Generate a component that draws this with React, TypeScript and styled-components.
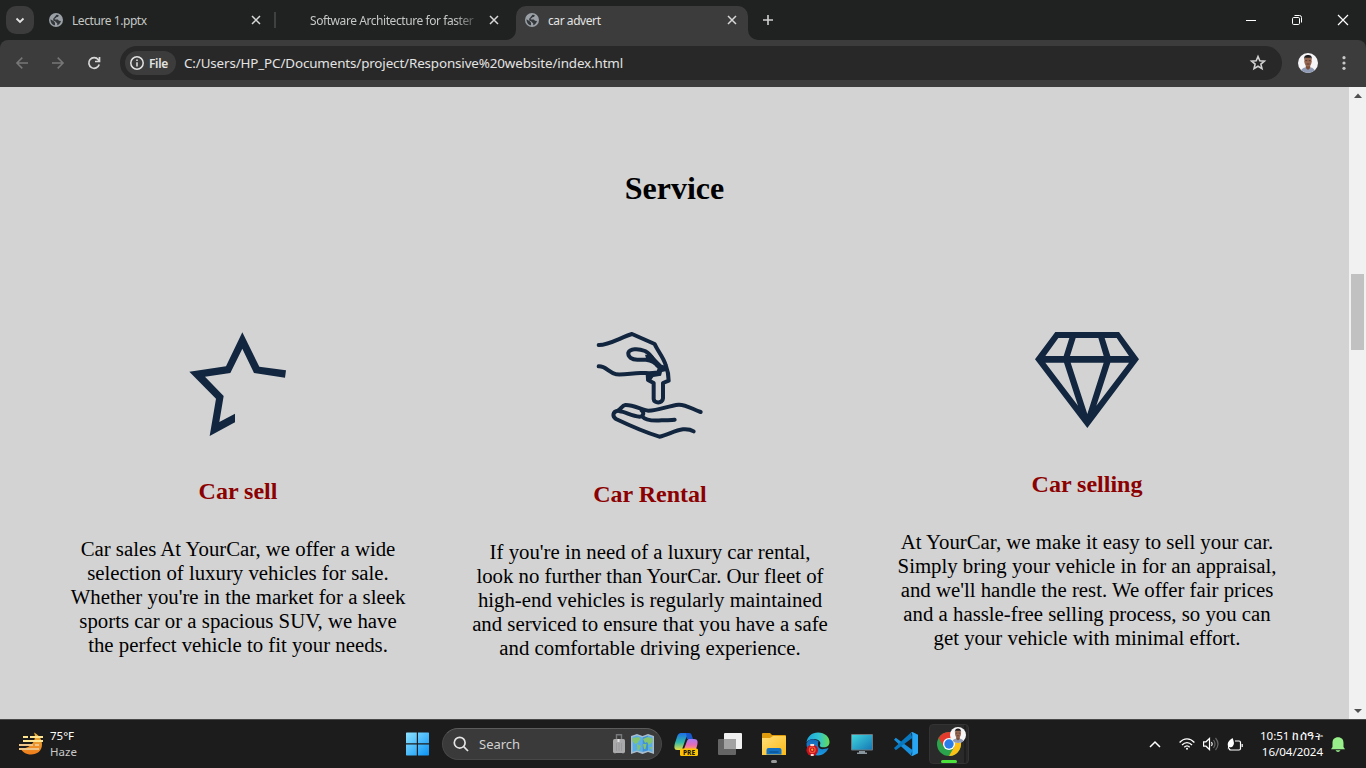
import React from "react";
import styled, { createGlobalStyle } from "styled-components";

const ui = `"Noto Sans", "Open Sans", sans-serif`;

const GlobalStyle = createGlobalStyle`
  * { box-sizing: border-box; }
  body { margin: 0; overflow: hidden; background: #202221; }
  svg { display: block; flex: none; overflow: visible; }
`;

const Screen = styled.div`
  width: 1366px;
  height: 768px;
  display: flex;
  flex-direction: column;
  font-family: ${ui};
`;

/* ---------- browser frame ---------- */

const TabStrip = styled.header`
  height: 40px;
  flex: none;
  display: flex;
  background: #202221;
  padding: 6px 0 0 6px;
`;

const TabSearch = styled.div`
  width: 28px;
  height: 28px;
  border-radius: 10px;
  background: #3c3c3c;
  display: grid;
  place-items: center;
`;

const Tab = styled.div<{ $active?: boolean; $width: number; $left: number; $right: number }>`
  position: relative;
  width: ${(p) => p.$width}px;
  height: 34px;
  display: flex;
  align-items: center;
  padding: 0 ${(p) => p.$right}px 6px ${(p) => p.$left}px;
  border-radius: 10px 10px 0 0;
  background: ${(p) => (p.$active ? "#3c3c3c" : "transparent")};
  color: ${(p) => (p.$active ? "#e3e3e3" : "#c4c7c5")};
`;

const TabFoot = styled.svg<{ $side: "left" | "right" }>`
  position: absolute;
  bottom: 0;
  ${(p) => p.$side}: -10px;
`;

const TabTitle = styled.span<{ $fade?: boolean }>`
  flex: 1;
  min-width: 0;
  margin-left: 9px;
  padding-top: 1px;
  font-size: 12px;
  line-height: 18px;
  letter-spacing: -0.43px;
  white-space: nowrap;
  ${(p) => p.$fade && "mask-image: linear-gradient(90deg, #000 80%, transparent 96%);"}
`;

const FaviconGap = styled.span`
  width: 16px;
  flex: none;
`;

const Divider = styled.div`
  width: 2px;
  height: 16px;
  margin-top: 6px;
  background: #3f4140;
`;

const NewTab = styled.div`
  margin: 9px 0 0 15px;
`;

const WindowButtons = styled.div`
  margin-left: auto;
  display: flex;

  > span {
    width: 46px;
    height: 28px;
    display: grid;
    place-items: center;
  }
`;

const ToolbarBack = styled.div`
  background: #202221;
  flex: none;
`;

const Toolbar = styled.nav`
  height: 47px;
  display: flex;
  align-items: center;
  padding: 0 14px 1px 14px;
  background: #3c3c3c;
  border-radius: 8px 8px 0 0;
`;

const NavButton = styled.span`
  width: 36px;
  display: flex;
  padding-left: 2px;
`;

const AddressBar = styled.div`
  width: 1162px;
  height: 34px;
  margin-left: -2px;
  display: flex;
  align-items: center;
  padding: 0 16px 0 5px;
  border-radius: 17px;
  background: #282828;

  > svg { margin-top: -2px; }
`;

const FileChip = styled.div`
  width: 51px;
  height: 24px;
  display: flex;
  align-items: center;
  gap: 5px;
  padding-left: 5px;
  border-radius: 12px;
  background: #3c3c3c;
  color: #e3e3e3;
  font-size: 12px;
  font-weight: 600;
  letter-spacing: -0.35px;
`;

const Url = styled.span`
  flex: 1;
  margin-left: 8px;
  color: #e3e3e3;
  font-size: 13.4px;
  letter-spacing: -0.13px;
  white-space: nowrap;
`;

const ProfileSlot = styled.span`
  margin: 0 24px 0 16px;
`;

/* ---------- web page ---------- */

const Viewport = styled.div`
  height: 632px;
  flex: none;
  display: flex;
`;

const Page = styled.main`
  width: 1349px;
  padding-top: 83px;
  background: #d3d3d3;
  color: #000;
  font-family: "Liberation Serif", serif;
  text-align: center;
`;

const SectionTitle = styled.h1`
  margin: 0 0 126px;
  font-size: 32px;
  line-height: 36px;
`;

const Cards = styled.section`
  display: flex;
  align-items: flex-start;
  padding-left: 68px;
`;

const Card = styled.article<{ $width: number; $gap?: number }>`
  width: ${(p) => p.$width}px;
  margin-right: ${(p) => p.$gap ?? 0}px;
  display: flex;
  flex-direction: column;
  align-items: center;
`;

const CardTitle = styled.h2`
  margin: 41px 0 32px;
  color: #8b0000;
  font-size: 24px;
  line-height: 28px;
`;

const CardText = styled.p`
  margin: 0;
  font-size: 20.8px;
  line-height: 24px;
`;

const Line = styled.span`
  display: block;
  white-space: nowrap;
`;

const Scrollbar = styled.aside`
  width: 17px;
  background: #f1f1f1;
  display: flex;
  flex-direction: column;
  align-items: center;
  padding: 6px 0 6px;
`;

const Thumb = styled.div`
  width: 13px;
  height: 76px;
  margin: 176px 0 auto;
  background: #c1c1c1;
`;

/* ---------- taskbar ---------- */

const Taskbar = styled.footer`
  height: 49px;
  flex: none;
  display: flex;
  align-items: center;
  border-top: 1px solid #484848;
  background: #1c1c1c;
  color: #fff;
`;

const Weather = styled.div`
  width: 395px;
  display: flex;
  align-items: center;
  padding-left: 19px;
  gap: 7px;
  font-size: 11.5px;
  line-height: 16px;
`;

const Muted = styled.div`
  color: #c8c8c8;
`;

const AppCell = styled.div`
  position: relative;
  width: 44px;
  height: 48px;
  display: grid;
  place-items: center;
`;

const RunningDot = styled.i`
  position: absolute;
  left: 19px;
  bottom: 5px;
  width: 6px;
  height: 3px;
  border-radius: 2px;
  background: #9a9a9a;
`;

const SearchBox = styled.div`
  width: 220px;
  height: 32px;
  margin: 0 2px 0 3px;
  display: flex;
  align-items: center;
  padding: 0 7px 0 11px;
  border: 1px solid #474747;
  border-top-color: #5c5c5c;
  border-radius: 16px;
  background: #3a3a3a;
  color: #d2d2d2;
  font-size: 13px;

  > span { flex: 1; margin-left: 9px; }
  > svg:last-child { margin-left: 6px; }
`;

const Tray = styled.div`
  margin-left: auto;
  display: flex;
  align-items: center;
  padding-right: 21px;
`;

const TrayIcon = styled.span<{ $gap: number }>`
  margin-right: ${(p) => p.$gap}px;
`;

const Clock = styled.div`
  width: 63px;
  margin-right: 8px;
  display: flex;
  flex-direction: column;
  align-items: flex-end;
  font-size: 11.6px;
  line-height: 16px;
  letter-spacing: -0.05px;
  white-space: nowrap;
`;

const Meridiem = styled.span`
  font-size: 12px;
  letter-spacing: 0.4px;
`;

/* ---------- icons ---------- */

const Globe = () => (
  <svg width="14" height="14" viewBox="0 0 14 14">
    <circle cx="7" cy="7" r="7" fill="#9aa0a6" />
    <path d="M1.5 6.2 4.8 8.2 6 9.8V12.3C3.4 12 1.4 9.6 1.5 6.2ZM7.5 1.7 9.6 1.9C9.8 3.4 8.7 4 7.6 4.1 7.3 5 6.7 5.3 5.8 5.3V6.5H8.8L10 7.8 12 8C11.4 10.2 9.9 11.7 8.2 12.2L8.3 10.5 6 8.2 4.2 7.6V5.7L5.5 4.2Z" fill="#33373a" />
  </svg>
);

const Cross = ({ size = 8, color = "#d8d8d8", weight = 1.5 }: { size?: number; color?: string; weight?: number }) => (
  <svg width={size} height={size} viewBox={`0 0 ${size} ${size}`}>
    <path d={`M0 0 ${size} ${size}M${size} 0 0 ${size}`} stroke={color} strokeWidth={weight} />
  </svg>
);

const Avatar = ({ size }: { size: number }) => (
  <svg width={size} height={size} viewBox="0 0 20 20">
    <clipPath id={`face${size}`}><circle cx="10" cy="10" r="10" /></clipPath>
    <g clipPath={`url(#face${size})`}>
      <rect width="20" height="20" fill="#f6f6f8" />
      <path d="M2.5 20C2.5 15.5 6 14.3 10 14.3S17 15.5 17.5 20Z" fill="#8f9bb5" />
      <path d="M7.8 11H12.2V15L10 17 7.8 15Z" fill="#7a4e38" />
      <ellipse cx="10" cy="8.2" rx="3.7" ry="5.2" fill="#966751" />
      <path d="M6.1 7C5.6 3.3 7.500 2 10 2S14.400 3.300 13.900 7L13.200 4.700H6.800Z" fill="#211c1b" />
      <path d="M7.300 7.600H9.200M10.800 7.600H12.700M8.500 11H11.500" stroke="#4e3027" strokeWidth=".8" />
    </g>
  </svg>
);

const navy = "#12263f";

const StarArt = () => (
  <svg width="99" height="104" viewBox="27 36 297 312">
    <path fill={navy} d="M187 37 238 140 318 151 315 173 222 159 187 86 151 159 75 170 131 228 118 306 165 281V307L89 348 108 236 28 155 138 139Z" />
  </svg>
);

const KeyArt = () => (
  <svg width="108" height="107" viewBox="33 36 324 321" fill="none" stroke={navy} strokeWidth="12" strokeLinecap="round" strokeLinejoin="round">
    <path d="M41 75C70 76 108 52 141 42L209 72C218 93 235 111 242 135C248 151 251 166 251 182L234 189V235C233 251 207 251 206 237V189L189 180V168" />
    <path d="M41 139C63 138 71 158 94 163C123 165 145 158 170 159C185 159 197 161 212 158" />
    <path d="M216 136C205 121 202 104 180 93C159 85 135 86 130 98C128 111 141 119 157 119H183C201 121 213 129 221 141" />
    <path fill={navy} stroke="none" d="M180 104 202 106 230 134 244 138V153L231 156 228 167 205 171 197 182 183 178 182 161 212 157 219 145 209 131 185 121Z" />
    <path d="M347 276C323 268 303 253 281 254C249 257 222 272 190 272C170 270 146 254 121 255C110 256 110 268 98 272C82 275 82 290 93 297C135 317 181 337 223 350C249 345 268 331 294 328C308 327 318 329 326 334" />
    <path d="M104 274C121 275 139 288 164 290C176 289 178 277 170 272M170 288C182 302 207 303 230 301C249 300 259 301 269 299" />
  </svg>
);

const DiamondArt = () => (
  <svg width="104" height="97" viewBox="30 36 312 291">
    <path
      fill={navy}
      fillRule="evenodd"
      d="M91 36H282L342 118 187 324 30 118ZM100 54 61 108H116L133 54ZM152 54 135 108H236L220 54ZM239 54 256 108H312L275 54ZM61 128 159 257 117 128ZM137 128 187 282 236 128ZM256 128 214 257 312 128Z"
    />
  </svg>
);

const HazeArt = () => (
  <svg width="24" height="24" viewBox="0 0 24 24">
    <defs>
      <linearGradient id="moon" x2="0" y2="1"><stop stopColor="#e8b23c" /><stop offset="1" stopColor="#ef7d1b" /></linearGradient>
    </defs>
    <path d="M15 .5C20 3 23 7 23 12.500 23 19 18 22.500 12 22.500 7 22.500 3 20 1.500 16 9 18 19 10 15 .5Z" fill="url(#moon)" />
    <path d="M4 5H9M11 5H24M4 9H24" stroke="#ffe58f" strokeWidth="1.800" />
    <path d="M0 13H14M16 13H20M0 17H20" stroke="#efc489" strokeWidth="1.800" />
  </svg>
);

const WindowsArt = () => (
  <svg width="24" height="24" viewBox="-0.5 0 24 24">
    <defs><linearGradient id="win" x2="1" y2="1"><stop stopColor="#8fe3ff" /><stop offset="1" stopColor="#0a93f5" /></linearGradient></defs>
    <path d="M1 .5H11.3V11.3H.5V1ZM12.5.5H23L23.5 1V11.3H12.5ZM.5 12.5H11.3V23.5H1L.5 23ZM12.5 12.5H23.5V23L23 23.5H12.5Z" fill="url(#win)" />
  </svg>
);

const SuitcaseArt = () => (
  <svg width="12" height="20" viewBox="0 0 12 20">
    <path d="M3.5 5V.8H8.5V5" fill="none" stroke="#77797d" strokeWidth="1.4" />
    <rect y="5" width="12" height="14" rx="1.5" fill="#a9a9ab" />
    <path d="M3.5 9V17M6 9V17M8.5 9V17" stroke="#9a9a9d" />
    <path d="M1 19.5H3M9 19.5H11" stroke="#555" />
    <rect x="4.500" y="5" width="2" height="3" fill="#e2e2e2" />
  </svg>
);

const MapArt = () => (
  <svg width="23" height="20" viewBox="0 0 23 20">
    <path d="M0 2 6 0 11.5 2 17 0 23 2V20L17 18 11.5 20 6 18 0 20Z" fill="#a9bccb" />
    <path d="M1.5 3 6 1.5V16.5L1.5 18ZM6 1.5 11.5 3.5V18L6 16.5ZM17 1.5 21.5 3V18L17 16.5Z" fill="#5aaee8" />
    <path d="M11.5 3.5 17 1.5V16.5L11.5 18Z" fill="#3d92d8" />
    <path d="M1.5 4 8 3 9.5 5 6.5 9 4 10 1.5 7ZM6 10 10 12 8 16 6.5 17ZM12 5 16.5 3 21.5 4.5V8L18 11 16 8 14 9ZM12 10 15.5 10 14.5 15 13 15ZM18 13H21V16Z" fill="#84c46f" />
  </svg>
);

const CopilotArt = () => (
  <svg width="24" height="24" viewBox="0 0 24 24">
    <defs>
      <linearGradient id="cpl" x2="0" y2="1"><stop stopColor="#1e6fe8" /><stop offset=".55" stopColor="#30b9a8" /><stop offset="1" stopColor="#e7e044" /></linearGradient>
      <linearGradient id="cpr" x2="0" y2="1"><stop stopColor="#a77cf4" /><stop offset=".6" stopColor="#e66bb6" /><stop offset="1" stopColor="#ff9966" /></linearGradient>
    </defs>
    <path d="M7 1H15L12 6 8.5 16C8 18 7 18 5 18H3C0 18 0 15 1 11L3 5C4 2 5 1 7 1Z" fill="url(#cpl)" />
    <path d="M12 1H15C17 1 17.5 2 18 4L19 7H13Z" fill="#1759cc" />
    <path d="M16 7H20C24 7 24 10 23 14L22 17H10L13 9C13.7 7.5 14 7 16 7Z" fill="url(#cpr)" />
    <rect x="6" y="16.500" width="18" height="7.500" rx="1.5" fill="#ffc400" />
    <text x="15" y="22.700" textAnchor="middle" fontFamily={ui} fontSize="6.6" fontWeight="800" fill="#20180a">PRE</text>
  </svg>
);

const TaskViewArt = () => (
  <svg width="24" height="24" viewBox="0 0 24 24">
    <rect x="6" y="1" width="18" height="16" rx="1" fill="#f1f1f1" />
    <rect y="7" width="18" height="16" rx="1" fill="#6b6b6b" fillOpacity=".93" />
    <rect x="6" y="7" width="12" height="10" fill="#a2a2a2" />
  </svg>
);

const FolderArt = () => (
  <svg width="24" height="24" viewBox="0 0 24 24">
    <defs><linearGradient id="fold" x2="1" y2="1"><stop stopColor="#ffdf79" /><stop offset="1" stopColor="#fbb917" /></linearGradient></defs>
    <path d="M0 2Q0 1 1 1H8L10 3H23Q24 3 24 4V10H0Z" fill="#e09b0c" />
    <path d="M0 6H8L11 4H23Q24 4 24 5V23H0Z" fill="url(#fold)" />
    <path d="M4.500 22.500V18Q4.500 16 6.500 16H17.500Q19.500 16 19.500 18V22.500Z" fill="#1371c4" />
    <path d="M7.500 20H16.500" stroke="#0a528e" strokeWidth="1.4" />
  </svg>
);

const EdgeArt = () => (
  <svg width="24" height="24" viewBox="0 0 25 25">
    <defs>
      <linearGradient id="edg" x2="1"><stop stopColor="#1ca5dd" /><stop offset=".55" stopColor="#31c4cf" /><stop offset="1" stopColor="#65dc54" /></linearGradient>
      <linearGradient id="edb" x2="0" y2="1"><stop stopColor="#1267b7" /><stop offset="1" stopColor="#1a9be4" /></linearGradient>
    </defs>
    <path d="M.5 11C1.5 4.500 6 .5 12.500 .5 19.500 .5 24.500 5 24.500 10.500 24.500 14 22 16 18.500 16 15.500 16 14 15 14.500 13.500 16 11 14 8 10 7.500 5 7 2 8.500 .5 11Z" fill="url(#edg)" />
    <path d="M.5 12C2 8 6 7 9.500 8L13 9.500C11.500 15 13 17.500 17 18 19.500 18 21 17.500 23.500 16.500 22.500 20 18 24.500 12.500 24.500 6 24.500 .5 19.500 .5 12Z" fill="url(#edb)" />
    <circle cx="6.500" cy="19" r="6" fill="#c4121e" />
    <circle cx="6.500" cy="18.500" r="3" fill="none" stroke="#ef553b" strokeWidth="1.3" />
    <path d="M4.500 13.500H8.500M5 24H8" stroke="#f5ded8" strokeWidth="2" />
    <circle cx="6.500" cy="18.500" r="1.200" fill="#f0a030" />
  </svg>
);

const MonitorArt = () => (
  <svg width="22" height="20" viewBox="0 0 22 20">
    <defs><linearGradient id="mon" x2="1" y2="1"><stop stopColor="#41d4dc" /><stop offset="1" stopColor="#1479b6" /></linearGradient></defs>
    <rect width="22" height="16.500" rx="1" fill="#6b777d" />
    <rect x="1" y="1" width="20" height="14.500" fill="url(#mon)" />
    <path d="M8 17H14V18.500H16V20H6V18.500H8Z" fill="#8a969d" />
  </svg>
);

const CodeArt = () => (
  <svg width="24" height="24" viewBox="0 0 24 24">
    <path d="M1.800 5.800 0 7.800 17 23.500 18.500 18Z" fill="#178fdb" />
    <path d="M0 16 1.800 18.200 18.200 6 17 .5Z" fill="#0878be" />
    <path d="M17 .5 18.500 0 24 2.700V21.300L18.500 24 17 23.500 18.200 22V2Z" fill="#28a5f3" />
  </svg>
);

const ChromeArt = () => (
  <svg width="24" height="24" viewBox="0 0 24 24">
    <circle cx="12" cy="12" r="12" fill="#2ba24c" />
    <path d="M1.600 6A12 12 0 0 1 22.400 6H12L6.800 15Z" fill="#e33b2e" />
    <path d="M22.400 6A12 12 0 0 1 12 24L17.200 15 12 6Z" fill="#fbc116" />
    <circle cx="12" cy="12" r="6" fill="#fff" />
    <circle cx="12" cy="12" r="4.700" fill="#2a7de8" />
  </svg>
);

const ChromeTile = styled.div`
  position: relative;
  width: 40px;
  height: 40px;
  margin-right: 2px;
  padding: 7px;
  border: 1px solid #333;
  border-radius: 4px;
  background: linear-gradient(90deg, #2a2a2a 34px, #1e1e1e 34px, #1e1e1e 36px, #282828 36px);
`;

const ProfileBadge = styled.span`
  position: absolute;
  left: 20px;
  top: 2px;
`;

const ActiveMark = styled.i`
  position: absolute;
  left: 11px;
  bottom: 0;
  width: 16px;
  height: 3px;
  border-radius: 2px;
  background: #4ce23c;
`;

const services = [
  { title: "Car sell", width: 340, gap: 62, art: <StarArt />, lines: ["Car sales At YourCar, we offer a wide", "selection of luxury vehicles for sale.", "Whether you're in the market for a sleek", "sports car or a spacious SUV, we have", "the perfect vehicle to fit your needs."] },
  { title: "Car Rental", width: 360, gap: 67, art: <KeyArt />, lines: ["If you're in need of a luxury car rental,", "look no further than YourCar. Our fleet of", "high-end vehicles is regularly maintained", "and serviced to ensure that you have a safe", "and comfortable driving experience."] },
  { title: "Car selling", width: 380, gap: 0, art: <DiamondArt />, lines: ["At YourCar, we make it easy to sell your car.", "Simply bring your vehicle in for an appraisal,", "and we'll handle the rest. We offer fair prices", "and a hassle-free selling process, so you can", "get your vehicle with minimal effort."] },
];

export default function App() {
  return (
    <Screen>
      <GlobalStyle />
      <TabStrip>
        <TabSearch>
          <svg width="8" height="5" viewBox="0 0 8 5"><path d="M.5.500 4 4 7.500.500" fill="none" stroke="#e3e3e3" strokeWidth="1.800" /></svg>
        </TabSearch>
        <Tab $width={240} $left={15} $right={14}>
          <Globe />
          <TabTitle>Lecture 1.pptx</TabTitle>
          <Cross />
        </Tab>
        <Divider />
        <Tab $width={240} $left={9} $right={18}>
          <FaviconGap />
          <TabTitle $fade>Software Architecture for faster</TabTitle>
          <Cross />
        </Tab>
        <Tab $active $width={232} $left={9} $right={12}>
          <TabFoot $side="left" width="10" height="10" viewBox="0 0 10 10"><path d="M10 0V10H0A10 10 0 0 0 10 0Z" fill="#3c3c3c" /></TabFoot>
          <Globe />
          <TabTitle>car advert</TabTitle>
          <Cross />
          <TabFoot $side="right" width="10" height="10" viewBox="0 0 10 10"><path d="M0 0V10H10A10 10 0 0 1 0 0Z" fill="#3c3c3c" /></TabFoot>
        </Tab>
        <NewTab>
          <svg width="10" height="10" viewBox="0 0 10 10"><path d="M5 0V10M0 5H10" stroke="#d0d0d0" strokeWidth="1.600" /></svg>
        </NewTab>
        <WindowButtons>
          <span><svg width="10" height="10" viewBox="0 0 10 10"><path d="M0 5.500H10" stroke="#fff" /></svg></span>
          <span>
            <svg width="10" height="10" viewBox="0 0 10 10" fill="none" stroke="#fff">
              <rect x=".5" y="2.500" width="7" height="7" rx="1.200" />
              <path d="M2.500.500H7.500Q9.500.500 9.500 2.500V7.500" />
            </svg>
          </span>
          <span><Cross size={10} color="#fff" weight={1.2} /></span>
        </WindowButtons>
      </TabStrip>

      <ToolbarBack>
        <Toolbar>
          <NavButton><svg width="12" height="12" viewBox="0 0 12 12" fill="none" stroke="#777" strokeWidth="1.500"><path d="M12 6H1M6.300.600.900 6 6.300 11.400" /></svg></NavButton>
          <NavButton><svg width="12" height="12" viewBox="0 0 12 12" fill="none" stroke="#777" strokeWidth="1.500"><path d="M0 6H11M5.700.600 11.100 6 5.700 11.400" /></svg></NavButton>
          <NavButton>
            <svg width="12" height="12" viewBox="0 0 12 12" fill="none" stroke="#d8d8d8" strokeWidth="1.700"><path d="M11.200 7.500A5.300 5.300 0 1 1 10.300 2.700L11.300 4M11.500 0V4.500H7" /></svg>
          </NavButton>
          <AddressBar>
            <FileChip>
              <svg width="14" height="14" viewBox="0 0 14 14" fill="none" stroke="#e3e3e3" strokeWidth="1.500"><circle cx="7" cy="7" r="6.200" /><path d="M7 6.200V10.500M7 3.400V4.900" /></svg>
              File
            </FileChip>
            <Url>C:/Users/HP_PC/Documents/project/Responsive%20website/index.html</Url>
            <svg width="16" height="15" viewBox="0 0 16 15" fill="none" stroke="#d2d2d2" strokeWidth="1.600"><path d="M8 1.500 9.800 5.700 14.400 6.100 10.900 9.100 12 13.700 8 11.300 4 13.700 5.100 9.100 1.600 6.100 6.200 5.700Z" /></svg>
          </AddressBar>
          <ProfileSlot><Avatar size={20} /></ProfileSlot>
          <svg width="4" height="14" viewBox="0 0 4 14" fill="#c8c8c8"><circle cx="2" cy="1.700" r="1.600" /><circle cx="2" cy="7" r="1.600" /><circle cx="2" cy="12.300" r="1.600" /></svg>
        </Toolbar>
      </ToolbarBack>

      <Viewport>
        <Page>
          <SectionTitle>Service</SectionTitle>
          <Cards>
            {services.map((s) => (
              <Card key={s.title} $width={s.width} $gap={s.gap}>
                {s.art}
                <CardTitle>{s.title}</CardTitle>
                <CardText>{s.lines.map((l) => <Line key={l}>{l}</Line>)}</CardText>
              </Card>
            ))}
          </Cards>
        </Page>
        <Scrollbar>
          <svg width="8" height="5" viewBox="0 0 8 5"><path d="M0 5 4 .500 8 5Z" fill="#505050" /></svg>
          <Thumb />
          <svg width="8" height="4" viewBox="0 0 8 4"><path d="M0 0H8L4 4Z" fill="#505050" /></svg>
        </Scrollbar>
      </Viewport>

      <Taskbar>
        <Weather>
          <HazeArt />
          <div><div>75°F</div><Muted>Haze</Muted></div>
        </Weather>
        <AppCell><WindowsArt /></AppCell>
        <SearchBox>
          <svg width="16" height="16" viewBox="0 0 16 16" fill="none" stroke="#e4e4e4" strokeWidth="1.700"><circle cx="5.700" cy="6.700" r="5.400" /><path d="M9.700 10.700 14 15" /></svg>
          <span>Search</span>
          <SuitcaseArt />
          <MapArt />
        </SearchBox>
        <AppCell><CopilotArt /></AppCell>
        <AppCell><TaskViewArt /></AppCell>
        <AppCell><FolderArt /><RunningDot /></AppCell>
        <AppCell><EdgeArt /></AppCell>
        <AppCell><MonitorArt /></AppCell>
        <AppCell><CodeArt /></AppCell>
        <AppCell>
          <ChromeTile>
            <ChromeArt />
            <ProfileBadge><Avatar size={16} /></ProfileBadge>
            <ActiveMark />
          </ChromeTile>
        </AppCell>
        <Tray>
          <TrayIcon $gap={18}><svg width="12" height="7" viewBox="0 0 12 7"><path d="M1 6 6 1 11 6" fill="none" stroke="#fff" strokeWidth="1.500" /></svg></TrayIcon>
          <TrayIcon $gap={8}>
            <svg width="16" height="12" viewBox="0 0 16 12" fill="none" stroke="#fff" strokeWidth="1.300"><path d="M.6 4.500C5-.300 11-.300 15.400 4.500M3 7C6 3.700 10 3.700 13 7M5.300 9.200C7 7.400 9 7.400 10.700 9.200" /><circle cx="8" cy="10.700" r="1" fill="#fff" stroke="none" /></svg>
          </TrayIcon>
          <TrayIcon $gap={8}>
            <svg width="16" height="14" viewBox="0 0 16 14" fill="none" stroke="#fff" strokeWidth="1.200"><path d="M.6 4.800H3L6.500 1.500V12.500L3 9.200H.6ZM8.500 5Q10 7 8.500 9" /><path d="M10.500 3Q13.500 7 10.500 11M12.500 1Q17.500 7 12.500 13" stroke="#666" /></svg>
          </TrayIcon>
          <TrayIcon $gap={17}>
            <svg width="16" height="13" viewBox="0 0 16 13" fill="none" stroke="#fff" strokeWidth="1.200"><path d="M8 3H12Q13.500 3 13.500 4.500V10.500Q13.500 12 12 12H4Q2 12 2 10M15.200 6V9" /><path d="M5.500 0Q8 5 6 8 4.500 10 2.500 9L.8 11.500 1 8.500Q-.8 4 5.500 0Z" fill="#fff" stroke="none" /></svg>
          </TrayIcon>
          <Clock><div>10:51 <Meridiem>ከሰዓት</Meridiem></div><div>16/04/2024</div></Clock>
          <svg width="14" height="15" viewBox="0 0 14 15"><path d="M0 12.300 1.500 10V6C1.500 2.500 3.500.300 7 .300S12.500 2.500 12.500 6V10L14 12.300ZM4.500 13.200H9.500Q8.500 15 7 15T4.500 13.200Z" fill="#98f08b" /></svg>
        </Tray>
      </Taskbar>
    </Screen>
  );
}
